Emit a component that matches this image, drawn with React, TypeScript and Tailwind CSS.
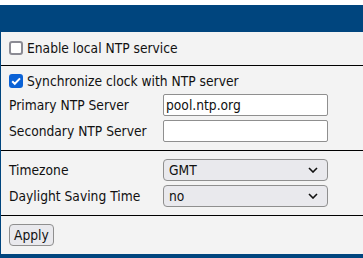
import { useState } from 'react';

const Chevron = () => (
  <svg
    className='pointer-events-none absolute right-[10px] top-1/2 -translate-y-1/2'
    width='10'
    height='6'
    viewBox='0 0 10 6'
    fill='none'
  >
    <path d='M1 1l4 4 4-4' stroke='#111' strokeWidth='1.6' />
  </svg>
);

const CheckBox = ({ checked, onChange }: { checked: boolean; onChange: (v: boolean) => void }) => (
  <span className='relative flex w-[14px] h-[14px] shrink-0'>
    <input
      type='checkbox'
      className='appearance-none m-0 w-[14px] h-[14px] rounded-[3px] border-2 border-[#8b8b94] bg-white checked:bg-[#0b62d6] checked:border-[#0b62d6]'
      checked={checked}
      onChange={(e) => onChange(e.target.checked)}
    />
    {checked && (
      <svg
        className='pointer-events-none absolute inset-0'
        width='14'
        height='14'
        viewBox='0 0 14 14'
        fill='none'
      >
        <path d='M3.2 7.2l2.6 2.6L11 4.4' stroke='#fff' strokeWidth='2' />
      </svg>
    )}
  </span>
);

const Row = ({ label, children }: { label: string; children: React.ReactNode }) => (
  <div className='flex items-center h-[26px]'>
    <div className='w-[154px] shrink-0'>{label}</div>
    {children}
  </div>
);

const App = () => {
  const [enableLocal, setEnableLocal] = useState(false);
  const [sync, setSync] = useState(true);
  const [primary, setPrimary] = useState('pool.ntp.org');
  const [secondary, setSecondary] = useState('');
  const [tz, setTz] = useState('GMT');
  const [dst, setDst] = useState('no');

  return (
    <div
      className='w-[363px] h-[258px] bg-white pt-[5px] text-[13.7px] text-[#111] overflow-hidden'
      style={{ fontFamily: '"DejaVu Sans Condensed", "DejaVu Sans", Verdana, sans-serif' }}
    >
      {/* Title bar */}
      <div className='h-[27px] bg-[#00457e]' />

      {/* Panel */}
      <div className='h-[226px] bg-[#f3f3f3] border-l border-b-4 border-[#00457e] flex flex-col'>
        <div className='h-[33px] flex items-center pl-[8px]'>
          <label className='flex items-center gap-[4px]'>
            <CheckBox checked={enableLocal} onChange={setEnableLocal} />
            Enable local NTP service
          </label>
        </div>
        <div className='h-px bg-black' />

        <div className='h-[84px] pl-[8px] pt-[4px]'>
          <label className='flex items-center gap-[4px] h-[22px]'>
            <CheckBox checked={sync} onChange={setSync} />
            Synchronize clock with NTP server
          </label>
          <Row label='Primary NTP Server'>
            <input
              className='w-[165px] h-[22px] px-[2px] bg-white border border-[#8f8f8f] rounded-[2px]'
              value={primary}
              onChange={(e) => setPrimary(e.target.value)}
            />
          </Row>
          <Row label='Secondary NTP Server'>
            <input
              className='w-[165px] h-[22px] px-[2px] bg-white border border-[#8f8f8f] rounded-[2px]'
              value={secondary}
              onChange={(e) => setSecondary(e.target.value)}
            />
          </Row>
        </div>
        <div className='h-px bg-black' />

        <div className='h-[64px] pl-[8px] pt-[6px]'>
          <Row label='Timezone'>
            <div className='relative'>
              <select
                className='appearance-none w-[165px] h-[22px] pl-[5px] bg-[#e9e9ed] border border-[#8f8f8f] rounded-[4px]'
                value={tz}
                onChange={(e) => setTz(e.target.value)}
              >
                <option>GMT</option>
                <option>UTC</option>
              </select>
              <Chevron />
            </div>
          </Row>
          <Row label='Daylight Saving Time'>
            <div className='relative'>
              <select
                className='appearance-none w-[165px] h-[22px] pl-[5px] bg-[#e9e9ed] border border-[#8f8f8f] rounded-[4px]'
                value={dst}
                onChange={(e) => setDst(e.target.value)}
              >
                <option>no</option>
                <option>yes</option>
              </select>
              <Chevron />
            </div>
          </Row>
        </div>
        <div className='h-px bg-black' />

        <div className='flex-1 pl-[8px] pt-[8px]'>
          <button className='h-[22px] px-[4px] bg-[#e9e9ed] border border-[#8f8f8f] rounded-[4px]'>
            Apply
          </button>
        </div>
      </div>
    </div>
  );
};

export default App;
